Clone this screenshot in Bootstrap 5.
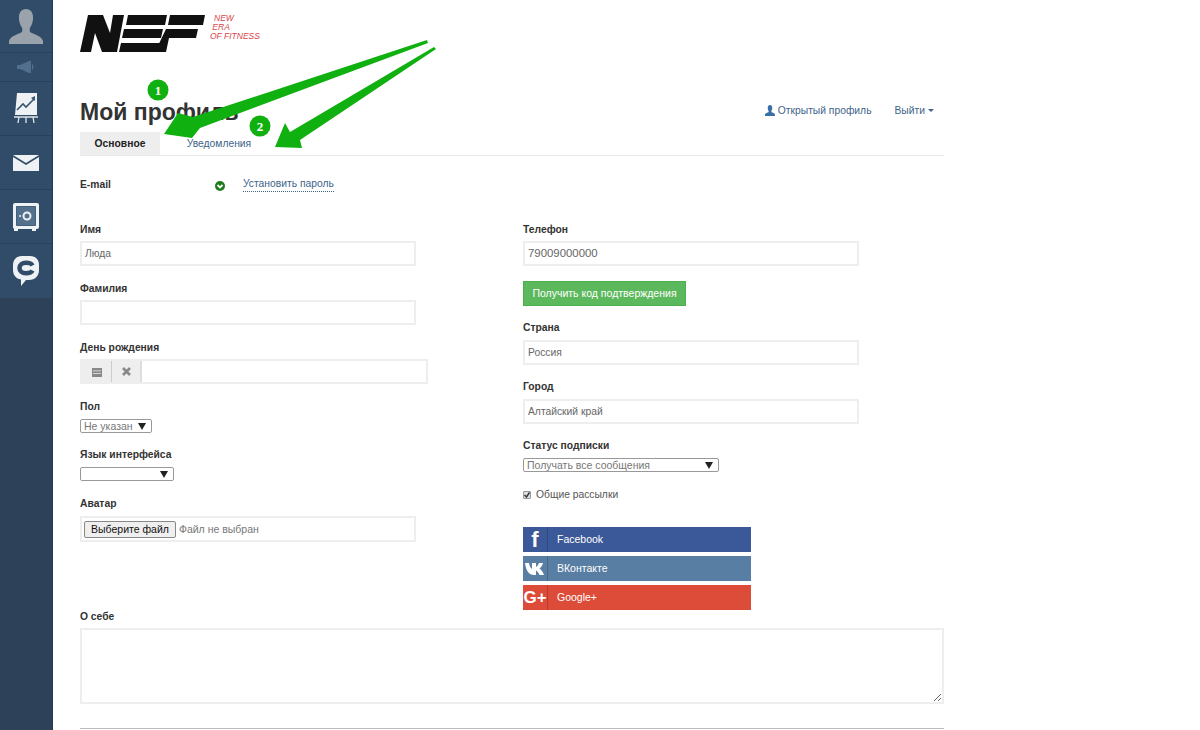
<!DOCTYPE html>
<html lang="ru">
<head>
<meta charset="utf-8">
<title>Мой профиль</title>
<link href="https://cdn.jsdelivr.net/npm/bootstrap@5.3.0/dist/css/bootstrap.min.css" rel="stylesheet">
<style>
html,body{height:730px;overflow:hidden}
body{font-family:"Liberation Sans",Arial,sans-serif;font-size:10.3px;color:#555;background:#fff}
.shell{height:730px;position:relative}
.side{width:53px;flex:none;background:#2d4159;border-right:1px solid #26394f}
.side-top{background:#314c69}
.side-item{display:flex;align-items:center;justify-content:center;border-bottom:1px solid #29405a}
.h-a{height:53px}.h-s{height:29px}.h-i{height:54px}
.page{width:864px;margin-left:27px}
.logo-row{height:91px;padding-top:15px}
.logo-word{font:italic 400 8.5px/9px "Liberation Sans",sans-serif;color:#d9434a;margin:-1px 0 0 5px}
.logo-word span{display:block}
.head-row{height:41px}
.ttl{font:700 23px/26px "Liberation Sans",sans-serif;color:#333;margin:0;padding-top:8px}
.head-links{margin-right:10px;gap:23px}
.tlink{color:#40638a;text-decoration:none;font-size:10.3px}
.tlink-gap{gap:3px}
.caret-i{margin-left:3px}
.tabbar{border-bottom:1px solid #e8e8e8;height:24px}
.tabbar a{display:block;height:23px;line-height:23px;font-size:10.3px;text-decoration:none;color:#40638a;text-align:center}
.tabbar a.on{width:80px;background:#eee;color:#222;font-weight:700}
.tabbar a.off{width:118px}
.mail-row{height:66px;padding-top:21px;line-height:15px}
.lbl{display:block;font-size:10.3px;font-weight:700;line-height:15px;color:#333;margin:0}
.mail-lbl{width:134px}
.ok{width:10px;height:10px;margin:0 18px 0 1px}
.dash{color:#40638a;text-decoration:none;border-bottom:1px dotted #40638a;line-height:14px}
.form-cols{height:387px}
.col-l{width:443px}
.col-r{width:421px}
.fld{width:336px;height:25px;border:2px solid #eee;border-radius:0;background:#fff;padding:0 3px;font-size:10.3px;color:#666;line-height:21px;display:block;outline:0}
.fld-num{font-size:11.4px}
.gp{margin-bottom:15px}
.gp .lbl{margin-bottom:4px}
.gp.tight .lbl{margin-bottom:5px}
.gp-14{margin-bottom:14px}
.gp-6{margin-bottom:6px}
.date-wrap{width:348px;height:25px;border:2px solid #eee;display:flex}
.date-btn{width:30px;background:#eee;border-right:1px solid #ccc;display:flex;align-items:center;justify-content:center}
.date-btn+.date-btn{border-right:2px solid #ddd}
.nsel{display:block;height:14px;font:10.5px/12px "Liberation Sans",sans-serif;color:#777;border:1px solid #999;border-radius:2px;background:#fff;padding:0 3px;position:relative;overflow:hidden}
.nsel i{position:absolute;right:5px;top:3px;width:0;height:0;border-left:4px solid transparent;border-right:4px solid transparent;border-top:7px solid #222}
.file-box{width:336px;height:26px;border:2px solid #eee;padding:0 2px;display:flex;align-items:center;font:10.5px "Liberation Sans",sans-serif;color:#777}
.file-btn{font:10.5px "Liberation Sans",sans-serif;color:#111;border:1px solid #888;border-radius:2px;background:#efefef;padding:0 6px;height:17px;line-height:15px;margin-right:3px}
.get-btn{--bs-btn-font-size:10.5px;--bs-btn-font-weight:400;--bs-btn-padding-y:0;--bs-btn-padding-x:0;--bs-btn-border-radius:0;--bs-btn-bg:#5cb85c;--bs-btn-border-color:#4cae4c;--bs-btn-color:#fff;width:163px;height:25px;line-height:22px;display:block;margin:15px 0 14px}
.chk{width:8px;height:8px;border:1px solid #999;border-radius:1px;background:#ddd;display:flex;align-items:center;justify-content:center;margin-right:5px}
.soc{width:228px;height:25px;color:#fff;display:flex;align-items:center;margin-bottom:4px;font-size:10.5px;text-decoration:none}
.soc-i{width:25px;height:100%;display:flex;align-items:center;justify-content:center;border-right:1px solid rgba(0,0,0,.18);margin-right:9px;font:700 22px/1 "Liberation Sans",sans-serif}
.soc-g{font-size:17px}
.fb{background:#3b5998}.vk{background:#587ea3}.gg{background:#dd4b39}
.soc-list{margin-top:15px}
.chk-row{height:34px}
.bio-lbl{margin:0 0 4px}
.area{width:864px;height:76px;border:2px solid #eee;display:block;resize:both;outline:0;background:#fff}
.rule{border:0;border-top:1px solid #bbb;opacity:1;margin:24px 0 0}
.w-pol{width:72px}.w-lang{width:94px}.w-sub{width:196px}
.over{position:absolute;left:0;top:0;pointer-events:none}
.over text{font:700 13px "Liberation Serif",serif;fill:#fff}
</style>
</head>
<body>
<div class="shell d-flex">
  <aside class="side">
    <div class="side-top">
      <div class="side-item h-a"><svg width="34" height="35" viewBox="0 0 36 36" preserveAspectRatio="none"><path fill="#9aa3ab" d="M18 0c5 0 7.500 4 7.500 9 0 4-1.500 8-3.500 10.500v4c2 2 12 3.500 14 9.500v3H0v-3c2-6 12-7.500 14-9.500v-4C12 17 10.500 13 10.500 9c0-5 2.500-9 7.500-9z"/></svg></div>
      <div class="side-item h-s"><svg width="18" height="12" viewBox="0 0 18 12"><path fill="#51708f" d="M0 4h3l9-4h2v12h-2L3 8H0zM15 3c2 1 2 5 0 6z"/></svg></div>
      <div class="side-item h-i"><svg width="24" height="32" viewBox="0 0 24 32"><path fill="#eef2f4" d="M3 0h20v22H1z"/><path fill="none" stroke="#3a5570" stroke-width="1.600" d="M3 17l6-6 3 3 8-8"/><path fill="#3a5570" d="M21 3v5l-4-3z"/><path fill="none" stroke="#dfe5e9" stroke-width="1.300" d="M0 24h24M5 24l-1 6M12 24v6M19 24l1 6"/></svg></div>
      <div class="side-item h-i"><svg width="26" height="16" viewBox="0 0 26 16"><path fill="#eef2f4" d="M0 0h26L13 8z"/><path fill="#eef2f4" d="M0 2l13 8 13-8v14H0z"/></svg></div>
      <div class="side-item h-i"><svg width="26" height="28" viewBox="0 0 26 28"><path fill="#eef2f4" fill-rule="evenodd" d="M2 0h22a2 2 0 0 1 2 2v22a2 2 0 0 1-2 2h-1v2h-4v-2H5v2H1v-2.200A2 2 0 0 1 0 24V2a2 2 0 0 1 2-2zM4 3a1 1 0 0 0-1 1v18a1 1 0 0 0 1 1h18a1 1 0 0 0 1-1V4a1 1 0 0 0-1-1z"/><rect x="3.500" y="3.500" width="19" height="19" fill="#53708c"/><circle cx="14" cy="13" r="3.500" fill="none" stroke="#eef2f4" stroke-width="2"/><circle cx="7" cy="13" r="1" fill="#eef2f4"/></svg></div>
      <div class="side-item h-i border-0"><svg width="26" height="30" viewBox="0 0 26 30"><path fill="#eef2f4" fill-rule="evenodd" d="M9 0h8c6 0 9 4 9 9v5c0 6-4 10-10 10h-3l-5 6v-6.400C3 22.600 0 19 0 14V9c0-5 3-9 9-9z"/><path fill="none" stroke="#314c69" stroke-width="4.500" d="M19.500 9.500C18.500 7.500 16 6.800 13 6.800c-4 0-6.500 2-6.500 5.200s2.500 5.200 6.500 5.200c3 0 5.500-.7 6.500-2.700"/></svg></div>
    </div>
  </aside>
  <main class="page">
    <div class="logo-row d-flex">
      <svg width="125" height="38" viewBox="0 0 125 38"><path fill="#111" d="M8 0h15l7 18 3-18h11l-7 37H22l-7-19-4 19H0zM48 0h39l-2 10H46zM44 14h39l-2 9H42zM41 28h39l-2 9H39zM90 0h35l-2 10H88zM86 14h32l-2 9H89l-3 14H75z"/></svg>
      <div class="logo-word"><span class="ps-1">NEW</span><span>&nbsp;ERA</span><span>OF FITNESS</span></div>
    </div>
    <div class="head-row d-flex justify-content-between">
      <h1 class="ttl">Мой профиль</h1>
      <div class="d-flex align-items-start head-links pt-2">
        <a class="tlink d-flex align-items-center tlink-gap mt-1" href="#"><svg width="10" height="11" viewBox="0 0 11 11" preserveAspectRatio="none"><path fill="#3a6ea5" d="M5.500 0C7 0 8 1.200 8 3c0 1.200-.5 2.300-1 3v1c1 .5 4 1 4 3v1H0v-1c0-2 3-2.500 4-3V6c-.5-.7-1-1.800-1-3 0-1.800 1-3 2.500-3z"/></svg>Открытый профиль</a>
        <a class="tlink d-flex align-items-center mt-1" href="#">Выйти<svg class="caret-i" width="6" height="4" viewBox="0 0 6 4"><path fill="#40638a" d="M0 0h6L3 3z"/></svg></a>
      </div>
    </div>
    <nav class="tabbar d-flex">
      <a class="on" href="#">Основное</a>
      <a class="off" href="#">Уведомления</a>
    </nav>
    <div class="mail-row d-flex align-items-start">
      <span class="lbl mail-lbl">E-mail</span>
      <svg class="ok mt-1" viewBox="0 0 10 10"><circle cx="5" cy="5" r="5" fill="#1d7a1d"/><path fill="none" stroke="#fff" stroke-width="1.800" d="M2.500 4l2.500 2.500L7.500 4"/></svg>
      <a class="dash" href="#">Установить пароль</a>
    </div>
    <div class="form-cols d-flex">
      <div class="col-l">
        <div class="gp"><label class="lbl">Имя</label><div class="fld">Люда</div></div>
        <div class="gp"><label class="lbl">Фамилия</label><div class="fld"></div></div>
        <div class="gp"><label class="lbl">День рождения</label>
          <div class="date-wrap">
            <span class="date-btn"><svg width="10" height="10" viewBox="0 0 10 10"><path fill="#888" d="M0 1h10v9H0z"/><path fill="#eee" d="M1 3.500h8v.8H1zM1 6h8v.8H1z"/></svg></span>
            <span class="date-btn"><svg width="9" height="9" viewBox="0 0 9 9"><path stroke="#888" stroke-width="2.600" d="M1 1l7 7M8 1L1 8"/></svg></span>
          </div>
        </div>
        <div class="gp gp-14 tight"><label class="lbl">Пол</label><span class="nsel w-pol">Не указан<i></i></span></div>
        <div class="gp tight"><label class="lbl">Язык интерфейса</label><span class="nsel w-lang"><i></i></span></div>
        <div class="gp tight"><label class="lbl">Аватар</label><div class="file-box"><span class="file-btn">Выберите файл</span>Файл не выбран</div></div>
      </div>
      <div class="col-r">
        <div><label class="lbl mb-1">Телефон</label><div class="fld fld-num">79009000000</div></div>
        <a class="btn get-btn" href="#">Получить код подтверждения</a>
        <div class="gp gp-14 tight"><label class="lbl">Страна</label><div class="fld">Россия</div></div>
        <div class="gp gp-14 tight"><label class="lbl">Город</label><div class="fld">Алтайский край</div></div>
        <div class="gp gp-6 tight"><label class="lbl">Статус подписки</label><span class="nsel w-sub">Получать все сообщения<i></i></span></div>
        <div class="d-flex align-items-center chk-row"><span class="chk"><svg width="6" height="6" viewBox="0 0 6 6"><path fill="none" stroke="#333" stroke-width="1.400" d="M.5 3l2 2L5.500 .5"/></svg></span>Общие рассылки</div>
        <div class="soc-list">
          <a class="soc fb" href="#"><span class="soc-i">f</span>Facebook</a>
          <a class="soc vk" href="#"><span class="soc-i"><svg width="20" height="12" viewBox="0 0 20 12"><path fill="#fff" d="M0 0h4c.5 3 1.500 5 3 6V0h4v4c1.500-1 2.500-2.500 3-4h4c-.5 2.500-2 4.500-3.500 5.500 1.500 1 3.500 3.500 4.500 6.500h-4.500c-.7-2-2-3.500-3.500-4.500V12H9C4 12 1 8 0 0z"/></svg></span>ВКонтакте</a>
          <a class="soc gg mb-0" href="#"><span class="soc-i soc-g">G+</span>Google+</a>
        </div>
      </div>
    </div>
    <label class="lbl bio-lbl">О себе</label>
    <textarea class="area"></textarea>
    <hr class="rule">
  </main>
  <svg class="over" width="1200" height="730" viewBox="0 0 1200 730">
    <circle cx="158" cy="90" r="10.500" fill="#11b011"/><text x="158" y="94.500" text-anchor="middle">1</text>
    <circle cx="260" cy="126" r="10.500" fill="#11b011"/><text x="260" y="130.500" text-anchor="middle">2</text>
    <path fill="#11b011" d="M164 134L178 113L193 117L427 40L428 43L200 128L192 138z"/>
    <path fill="#11b011" d="M275 147L285 123L290 132L434 47L436 49L300 140L302 148z"/>
  </svg>
</div>
<script src="https://cdn.jsdelivr.net/npm/bootstrap@5.3.0/dist/js/bootstrap.bundle.min.js"></script>
</body>
</html>
